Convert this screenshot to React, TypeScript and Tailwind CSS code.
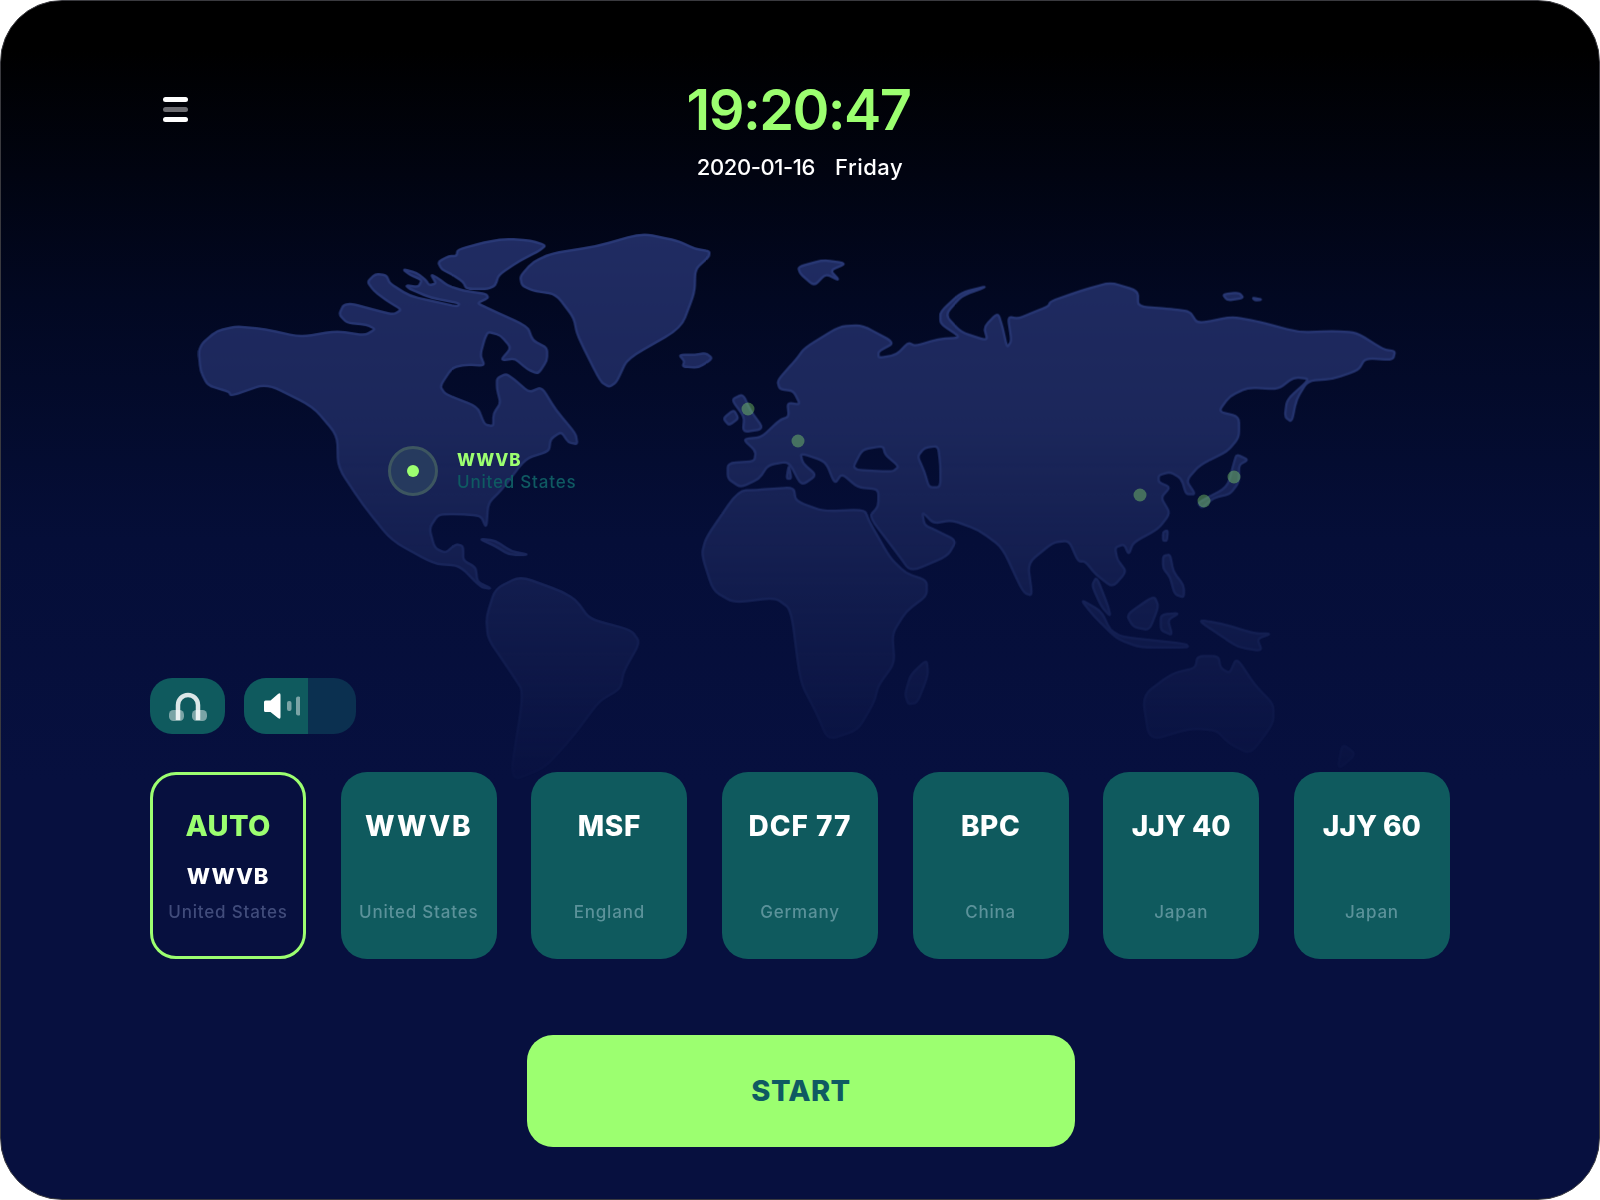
const font = "font-['Inter','Liberation_Sans',sans-serif]";

// Turn "x,y x,y ..." into a closed path with softly rounded corners
function smooth(points: string) {
  const p = points
    .trim()
    .split(/\s+/)
    .map((s) => s.split(",").map(Number));
  const toward = (a: number[], b: number[], t: number) => [a[0] + (b[0] - a[0]) * t, a[1] + (b[1] - a[1]) * t];
  let d = "";
  p.forEach((pt, i) => {
    const a = toward(pt, p[(i - 1 + p.length) % p.length], 0.3);
    const b = toward(pt, p[(i + 1) % p.length], 0.3);
    d += `${i === 0 ? "M" : "L"}${a[0]},${a[1]}Q${pt[0]},${pt[1]} ${b[0]},${b[1]}`;
  });
  return d + "Z";
}

const americas = [
  "50,365 60,342 100,308 155,295 235,303 335,325 435,308 515,320 545,303 520,290 465,285 443,262 455,235 480,232 545,250 595,262 618,248 575,222 540,195 522,170 545,148 575,152 585,175 640,210 720,228 775,240 780,230 700,215 640,190 630,180 665,185 675,165 640,150 622,135 660,145 685,165 695,180 715,175 700,150 720,160 745,180 790,195 855,205 860,215 830,230 850,240 970,295 985,335 1025,355 1025,390 1000,428 970,415 935,385 895,390 925,355 895,320 860,310 850,330 838,375 850,405 800,402 760,410 725,462 740,485 830,520 850,570 875,575 875,540 895,510 885,470 885,440 910,428 935,445 975,480 1010,465 1050,530 1105,595 1110,625 1085,620 1065,590 1035,610 1030,645 965,665 900,750 860,790 855,860 840,825 770,820 720,822 695,860 710,915 740,930 770,905 790,910 790,950 825,970 830,1010 870,1030 840,1025 780,965 710,960 590,895 510,795 440,690 438,600 370,520 240,455 140,490 135,478 75,460 55,420",
  "880,1030 950,995 1060,1035 1105,1060 1145,1115 1260,1145 1285,1180 1240,1260 1230,1310 1170,1345 1100,1440 1020,1530 920,1570 960,1320 925,1265 860,1170 855,1110",
  "720,115 750,98 772,98 775,80 850,60 910,50 980,55 1022,68 1000,85 950,110 890,150 880,180 860,190 800,190 790,170 760,150 730,135",
  "950,155 985,115 1040,90 1160,72 1290,35 1390,55 1440,78 1480,85 1478,100 1440,135 1438,200 1400,300 1250,385 1220,450 1200,465 1175,450 1110,320 1100,270 1050,205 985,195 955,180",
  "1395,375 1440,375 1470,370 1488,385 1450,410 1405,408 1410,392",
  "835,890 880,895 925,925 975,935 920,935 880,910",
];

const eastern = [
  "102,645 160,640 163,610 135,575 175,570 215,520 235,510 232,470 260,475 245,435 215,430 210,405 250,345 270,310 345,248 395,245 465,295 430,320 430,340 470,330 495,295 510,305 560,285 610,280 565,240 565,205 610,150 670,130 610,160 575,215 610,265 668,290 660,250 690,208 700,250 710,310 720,290 712,220 735,225 762,210 800,190 805,175 870,145 935,120 995,145 995,190 1070,198 1108,205 1125,240 1200,220 1260,235 1345,265 1420,262 1470,265 1530,315 1555,320 1550,345 1490,340 1475,375 1420,400 1365,405 1340,460 1330,525 1315,510 1320,460 1370,400 1335,395 1300,430 1235,425 1195,450 1170,495 1215,510 1215,570 1190,610 1130,650 1100,695 1120,735 1100,735 1090,690 1065,670 1040,680 1040,700 1065,715 1045,745 1065,790 1040,835 985,875 975,910 965,880 945,890 950,925 970,960 940,1005 905,970 880,930 865,930 845,870 810,875 755,935 765,1030 745,1020 700,890 650,840 590,810 550,820 525,785 530,825 555,840 600,870 580,915 500,960 470,905 410,800 430,770 430,720 385,715 350,675 335,705 315,640 260,615 265,645 295,680 262,710 235,640 190,650 170,690 130,715 102,690",
  "375,655 395,605 440,595 445,620 475,655 460,670 385,665",
  "515,625 530,600 560,595 565,650 565,715 540,715 530,670",
];

const easternIslands = [
  "125,725 180,722 245,715 250,755 310,785 400,780 410,815 455,920 490,965 535,985 535,1030 490,1075 460,1140 465,1225 430,1290 420,1340 385,1420 320,1448 295,1370 260,1280 240,1070 205,1035 115,1050 70,1015 45,910 55,860",
  "535,1215 538,1260 515,1340 495,1345 488,1315 500,1260",
  "135,445 150,490 180,545 135,555 138,510 110,460",
  "92,515 115,490 125,515 105,535",
  "235,650 240,690 230,690",
  "1125,760 1190,715 1205,640 1210,620 1235,635 1215,650 1215,700 1195,735 1160,745 1135,775",
  "1050,845 1060,840 1058,870 1050,870",
  "1050,915 1065,910 1072,960 1095,1000 1095,1035 1075,1025 1065,975 1050,950",
  "870,1040 915,1075 935,1130 960,1150 1100,1170 1105,1180 1000,1180 950,1155 900,1090",
  "905,975 930,1060 935,1090 915,1060 895,1000",
  "970,1085 1030,1030 1040,1060 1020,1130 985,1120",
  "1045,1085 1085,1080 1060,1100 1070,1145 1045,1130",
  "1125,1100 1175,1110 1250,1140 1285,1140 1255,1155 1265,1190 1215,1180 1180,1150",
  "1005,1320 1070,1255 1120,1240 1125,1205 1170,1205 1175,1240 1195,1255 1210,1210 1250,1290 1290,1345 1290,1400 1240,1490 1195,1460 1165,1420 1110,1415 1020,1450",
  "1440,1460 1470,1490 1430,1535",
  "255,75 310,55 360,65 325,85 345,115 315,95 290,130 260,95",
  "1180,155 1215,150 1225,165 1190,172",
  "1245,165 1265,170 1250,172",
];

const sleepingDots = [
  [747, 408],
  [797, 440],
  [1139, 494],
  [1203, 500],
  [1233, 476],
];

function WorldMap() {
  const land = { fill: "#202c63", stroke: "#2a3a78", strokeWidth: 2.5, strokeLinejoin: "round" as const };
  return (
    <svg className="absolute inset-0" width="1600" height="1200" viewBox="0 0 1600 1200">
      <defs>
        <linearGradient id="fade" x1="0" y1="230" x2="0" y2="790" gradientUnits="userSpaceOnUse">
          <stop offset="0" stopColor="#fff" />
          <stop offset="0.35" stopColor="#d8d8d8" />
          <stop offset="0.7" stopColor="#666" />
          <stop offset="1" stopColor="#080808" />
        </linearGradient>
        <mask id="mapFade" maskUnits="userSpaceOnUse" x="0" y="0" width="1600" height="1200">
          <rect width="1600" height="1200" fill="url(#fade)" />
        </mask>
      </defs>
      <g mask="url(#mapFade)">
        <g transform="translate(180,220) scale(0.3571)">
          {americas.map((a, i) => (
            <path key={i} d={smooth(a)} {...land} vectorEffect="non-scaling-stroke" />
          ))}
        </g>
        <g transform="translate(680,240) scale(0.4592,0.3444)">
          <path d={eastern.map(smooth).join("")} fillRule="evenodd" {...land} vectorEffect="non-scaling-stroke" />
          {easternIslands.map((a, i) => (
            <path key={i} d={smooth(a)} {...land} vectorEffect="non-scaling-stroke" />
          ))}
        </g>
      </g>
      {sleepingDots.map(([x, y]) => (
        <circle key={x} cx={x} cy={y} r="6.5" fill="#9cff70" fillOpacity="0.35" />
      ))}
    </svg>
  );
}

function Headphones() {
  return (
    <svg width="38" height="29" viewBox="0 0 38 29">
      <rect x="0" y="18" width="15" height="11" rx="4.5" fill="#fff" fillOpacity="0.45" />
      <rect x="23" y="18" width="15" height="11" rx="4.5" fill="#fff" fillOpacity="0.45" />
      <path d="M9 28V13a10 10 0 0 1 20 0v15" fill="none" stroke="#fff" strokeOpacity="0.85" strokeWidth="4.5" />
    </svg>
  );
}

function Speaker() {
  return (
    <svg width="36" height="28" viewBox="0 0 36 28">
      <path d="M1.5 8.5h5L14 2q2.500-2 2.500 1v22q0 3-2.500 1l-7.500-6h-5q-1.500 0-1.500-1.500v-8.500q0-1.500 1.500-1.500z" fill="#fff" />
      <rect x="23" y="9" width="4.500" height="10" rx="2" fill="#fff" fillOpacity="0.45" />
      <rect x="32" y="4.500" width="4.500" height="19" rx="2" fill="#fff" fillOpacity="0.45" />
    </svg>
  );
}

const stations = [
  { name: "WWVB", place: "United States", spacing: "tracking-[1.8px]" },
  { name: "MSF", place: "England", spacing: "tracking-[0.6px]" },
  { name: "DCF 77", place: "Germany", spacing: "tracking-[1px]" },
  { name: "BPC", place: "China", spacing: "tracking-[0.6px]" },
  { name: "JJY 40", place: "Japan", spacing: "tracking-[0px]" },
  { name: "JJY 60", place: "Japan", spacing: "tracking-[0px]" },
];

export default function App() {
  return (
    <div className="bg-white w-[1600px] h-[1200px]">
      <div
        className={`${font} relative overflow-hidden w-[1600px] h-[1200px] rounded-[62px] border border-[#3a3a3f] bg-[linear-gradient(180deg,#000000_0%,#000000_4%,#020822_25%,#050e38_45%,#07103f_65%,#07103f_100%)] flex flex-col px-[149px] pb-[52px] text-white`}
      >
        <WorldMap />

        {/* Station pin */}
        <div className="absolute left-[387px] top-[445px] flex items-center gap-[19px]">
          <div className="w-[50px] h-[50px] rounded-full border-[3px] border-[#3d5660] bg-[#263a5e] flex items-center justify-center">
            <div className="w-[12px] h-[12px] rounded-full bg-[#9cff70]" />
          </div>
          <div className="-mt-[1px]">
            <div className="text-[17px] leading-[22px] font-extrabold tracking-[0.9px] text-[#9cff70]">WWVB</div>
            <div className="text-[17px] leading-[22px] font-medium tracking-[0.8px] text-[#0f5a62]">United States</div>
          </div>
        </div>

        {/* Header */}
        <header className="relative grid grid-cols-[1fr_auto_1fr] pt-[79px]">
          <div className="flex flex-col gap-[5px] w-[25px] ml-[13px] mt-[17px]">
            <div className="h-[5px] rounded-full bg-white" />
            <div className="h-[5px] rounded-full bg-[#6b6b70]" />
            <div className="h-[5px] rounded-full bg-white" />
          </div>
          <div className="flex flex-col items-center">
            <div className="-ml-[3px] text-[56px] leading-[60px] font-semibold tracking-[-1.600px] text-[#9cff70]">19:20:47</div>
            <div className="mt-[13px] text-[22px] leading-[28px] font-medium flex gap-[20px]">
              <span className="tracking-[-0.4px]">2020-01-16</span>
              <span className="tracking-[0.5px]">Friday</span>
            </div>
          </div>
          <div />
        </header>

        {/* Audio controls */}
        <div className="relative mt-auto flex gap-[19px]">
          <div className="w-[75px] h-[56px] rounded-[22px] bg-[#0f5a5e] flex items-center justify-center">
            <Headphones />
          </div>
          <div className="w-[112px] h-[56px] rounded-[22px] bg-[#0b3050] overflow-hidden flex">
            <div className="w-[64px] h-full bg-[#0f5a5e] flex items-center justify-end pr-[8px]">
              <Speaker />
            </div>
          </div>
        </div>

        {/* Stations */}
        <div className="relative mt-[38px] grid grid-cols-7 gap-[34.500px]">
          <div className="h-[187px] rounded-[26px] border-[3px] border-[#9cff70] bg-[#07103f] flex flex-col items-center pt-[34px]">
            <div className="text-[29px] leading-[34px] font-extrabold tracking-[0.3px] text-[#9cff70]">AUTO</div>
            <div className="mt-[20px] text-[22px] leading-[26px] font-extrabold tracking-[0.9px]">WWVB</div>
            <div className="mt-[11px] text-[17px] leading-[24px] font-medium tracking-[0.8px] text-[#414c7b]">United States</div>
          </div>
          {stations.map((s) => (
            <div key={s.name} className="h-[187px] rounded-[26px] bg-[#0f5a5e] flex flex-col items-center pt-[37px]">
              <div className={`text-[28px] leading-[34px] font-extrabold ${s.spacing}`}>{s.name}</div>
              <div className="mt-[57px] text-[17px] leading-[24px] font-medium tracking-[0.8px] text-[#5b929a]">{s.place}</div>
            </div>
          ))}
        </div>

        <button className="relative mt-[76px] ml-[377px] w-[548px] h-[112px] rounded-[26px] bg-[#9cff70] text-[29px] font-extrabold tracking-[0.4px] text-[#0f5a62]">
          START
        </button>
      </div>
    </div>
  );
}
